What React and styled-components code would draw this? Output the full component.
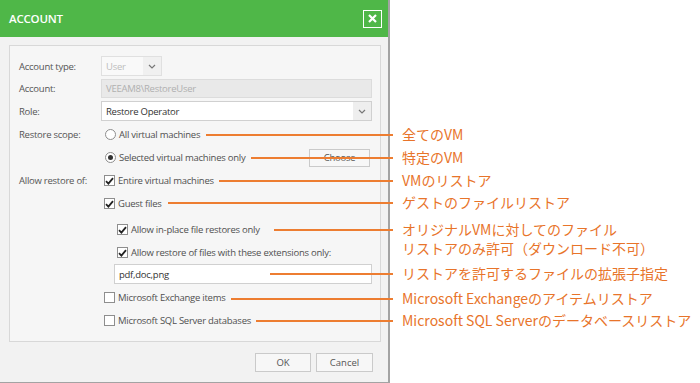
import React from 'react';
import styled, { createGlobalStyle } from 'styled-components';

const GlobalStyle = createGlobalStyle`
  html, body { margin: 0; padding: 0; background: #fff; }
  body { font-family: "Open Sans", "Noto Sans", sans-serif; }
`;

const Page = styled.div`
  position: relative;
  width: 700px;
  height: 383px;
  overflow: hidden;
`;

const Dialog = styled.div`
  width: 388px;
  height: 382px;
  border-right: 2px solid #a3a3a3;
  border-bottom: 1px solid #a3a3a3;
  background: #f2f2f2;
  display: flex;
  flex-direction: column;
`;

const TitleBar = styled.div`
  height: 37px;
  flex-shrink: 0;
  background: #4fb748;
  display: flex;
  align-items: center;
  justify-content: space-between;
  padding: 0 6px 0 9px;
`;

const Title = styled.span`
  color: #fff;
  font-size: 11.5px;
  font-weight: 600;
  letter-spacing: -0.2px;
`;

const CloseButton = styled.div`
  width: 19px;
  height: 18px;
  box-sizing: border-box;
  border: 1.5px solid #fff;
  display: flex;
  align-items: center;
  justify-content: center;
`;

const Body = styled.div`
  padding: 8px 7px 0 9px;
`;

const GroupBox = styled.div`
  border: 1px solid #d8d8d8;
  background: #f6f6f6;
  padding: 10px 8px 9px 9px;
  font-size: 9.5px;
  letter-spacing: -0.25px;
  color: #505050;
`;

const Row = styled.div`
  display: flex;
  align-items: center;
  height: ${p => p.$h || 23}px;
  margin-top: ${p => p.$mt || 0}px;
`;

const Label = styled.div`
  width: 82px;
  flex-shrink: 0;
  color: #555;
`;

const Control = styled.div`
  flex: 1;
  display: flex;
  align-items: center;
  height: 100%;
  padding-left: ${p => p.$indent || 0}px;
`;

const Combo = styled.div`
  width: ${p => (p.$w ? `${p.$w}px` : '100%')};
  height: 100%;
  box-sizing: border-box;
  border: 1px solid ${p => (p.$disabled ? '#e0e0e0' : '#d0d0d0')};
  background: ${p => (p.$disabled ? '#f9f9f9' : '#fff')};
  color: ${p => (p.$disabled ? '#bdbdbd' : '#333')};
  display: flex;
  align-items: center;
`;

const ComboText = styled.span`
  flex: 1;
  padding-left: 4px;
`;

const ComboArrow = styled.div`
  width: 18px;
  height: 100%;
  background: ${p => (p.$disabled ? '#f0f0f0' : '#eeeeee')};
  display: flex;
  align-items: center;
  justify-content: center;
`;

const TextBox = styled.div`
  width: 100%;
  height: 100%;
  box-sizing: border-box;
  border: 1px solid ${p => (p.$disabled ? '#dcdcdc' : '#d0d0d0')};
  background: ${p => (p.$disabled ? '#e9e9e9' : '#fff')};
  color: ${p => (p.$disabled ? '#b0b0b0' : '#333')};
  display: flex;
  align-items: center;
  padding-left: 4px;
`;

const Radio = styled.span`
  width: 11px;
  height: 11px;
  box-sizing: border-box;
  border: 1px solid #8e8e8e;
  border-radius: 50%;
  background: #fff;
  margin-left: 4px;
  display: flex;
  align-items: center;
  justify-content: center;
  flex-shrink: 0;
  &::after {
    content: '';
    display: ${p => (p.$checked ? 'block' : 'none')};
    width: 5px;
    height: 5px;
    border-radius: 50%;
    background: #333;
  }
`;

const Box = styled.span`
  width: 11px;
  height: 11px;
  box-sizing: border-box;
  border: 1px solid #8e8e8e;
  background: #fff;
  margin-left: 3px;
  display: flex;
  align-items: center;
  justify-content: center;
  flex-shrink: 0;
`;

const OptionText = styled.span`
  margin-left: 3px;
  white-space: nowrap;
  color: #505050;
`;

const Spacer = styled.div`
  flex: 1;
`;

const Button = styled.div`
  width: ${p => p.$w}px;
  height: ${p => p.$h || 19}px;
  box-sizing: border-box;
  border: 1px solid #cacaca;
  background: #f7f7f7;
  color: #555;
  font-size: 9.5px;
  display: flex;
  align-items: center;
  justify-content: center;
  margin-right: ${p => p.$mr || 0}px;
`;

const Footer = styled.div`
  display: flex;
  justify-content: flex-end;
  gap: 5px;
  padding: 11px 15px 0 0;
`;

const Callout = styled.div`
  position: absolute;
  left: ${p => p.$x}px;
  top: ${p => p.$y - 9.5}px;
  display: flex;
  align-items: flex-start;
`;

const Line = styled.div`
  width: ${p => p.$len}px;
  height: 2px;
  margin-top: 9px;
  background: #ed7d31;
`;

const Note = styled.div`
  margin-left: 9px;
  font-family: "Noto Sans CJK JP", "Noto Sans", sans-serif;
  font-size: 14px;
  line-height: 19px;
  color: #e8742a;
  white-space: pre;
`;

const Chevron = () => (
  <svg width="8" height="5" viewBox="0 0 8 5">
    <path d="M1 1 L4 4 L7 1" fill="none" stroke="#777" strokeWidth="1.2" />
  </svg>
);

const Check = () => (
  <svg width="9" height="8" viewBox="0 0 9 8">
    <path d="M1 4.2 L3.4 6.6 L8 1.2" fill="none" stroke="#222" strokeWidth="1.8" />
  </svg>
);

const CheckOption = ({ checked, children }) => (
  <>
    <Box>{checked && <Check />}</Box>
    <OptionText>{children}</OptionText>
  </>
);

const notes = [
  { x: 206, y: 134, text: '全てのVM' },
  { x: 251, y: 157, text: '特定のVM' },
  { x: 219, y: 180, text: 'VMのリストア' },
  { x: 168, y: 202, text: 'ゲストのファイルリストア' },
  { x: 274, y: 229, text: 'オリジナルVMに対してのファイル\nリストアのみ許可（ダウンロード不可）' },
  { x: 270, y: 273, text: 'リストアを許可するファイルの拡張子指定' },
  { x: 231, y: 298, text: 'Microsoft Exchangeのアイテムリストア' },
  { x: 256, y: 320, text: 'Microsoft SQL Serverのデータベースリストア' },
];

export default function App() {
  return (
    <Page>
      <GlobalStyle />
      <Dialog>
        <TitleBar>
          <Title>ACCOUNT</Title>
          <CloseButton>
            <svg width="9" height="9" viewBox="0 0 9 9">
              <path d="M1 1 L8 8 M8 1 L1 8" stroke="#fff" strokeWidth="2.2" />
            </svg>
          </CloseButton>
        </TitleBar>
        <Body>
          <GroupBox>
            <Row $h={20}>
              <Label>Account type:</Label>
              <Control>
                <Combo $w={61} $disabled>
                  <ComboText>User</ComboText>
                  <ComboArrow $disabled><Chevron /></ComboArrow>
                </Combo>
              </Control>
            </Row>
            <Row $h={19} $mt={3}>
              <Label>Account:</Label>
              <Control>
                <TextBox $disabled>VEEAM8\RestoreUser</TextBox>
              </Control>
            </Row>
            <Row $h={20} $mt={3}>
              <Label>Role:</Label>
              <Control>
                <Combo>
                  <ComboText>Restore Operator</ComboText>
                  <ComboArrow><Chevron /></ComboArrow>
                </Combo>
              </Control>
            </Row>
            <Row $mt={2}>
              <Label>Restore scope:</Label>
              <Control>
                <Radio />
                <OptionText>All virtual machines</OptionText>
              </Control>
            </Row>
            <Row>
              <Label />
              <Control>
                <Radio $checked />
                <OptionText>Selected virtual machines only</OptionText>
                <Spacer />
                <Button $w={61} $h={18} $mr={2}>Choose</Button>
              </Control>
            </Row>
            <Row>
              <Label>Allow restore of:</Label>
              <Control>
                <CheckOption checked>Entire virtual machines</CheckOption>
              </Control>
            </Row>
            <Row>
              <Label />
              <Control>
                <CheckOption checked>Guest files</CheckOption>
              </Control>
            </Row>
            <Row $mt={3}>
              <Label />
              <Control $indent={13}>
                <CheckOption checked>Allow in-place file restores only</CheckOption>
              </Control>
            </Row>
            <Row>
              <Label />
              <Control $indent={13}>
                <CheckOption checked>Allow restore of files with these extensions only:</CheckOption>
              </Control>
            </Row>
            <Row $h={20}>
              <Label />
              <Control $indent={13}>
                <TextBox>pdf,doc,png</TextBox>
              </Control>
            </Row>
            <Row $mt={2}>
              <Label />
              <Control>
                <CheckOption>Microsoft Exchange items</CheckOption>
              </Control>
            </Row>
            <Row>
              <Label />
              <Control>
                <CheckOption>Microsoft SQL Server databases</CheckOption>
              </Control>
            </Row>
          </GroupBox>
        </Body>
        <Footer>
          <Button $w={56}>OK</Button>
          <Button $w={57}>Cancel</Button>
        </Footer>
      </Dialog>
      {notes.map(n => (
        <Callout key={n.text} $x={n.x} $y={n.y}>
          <Line $len={393 - n.x} />
          <Note>{n.text}</Note>
        </Callout>
      ))}
    </Page>
  );
}
